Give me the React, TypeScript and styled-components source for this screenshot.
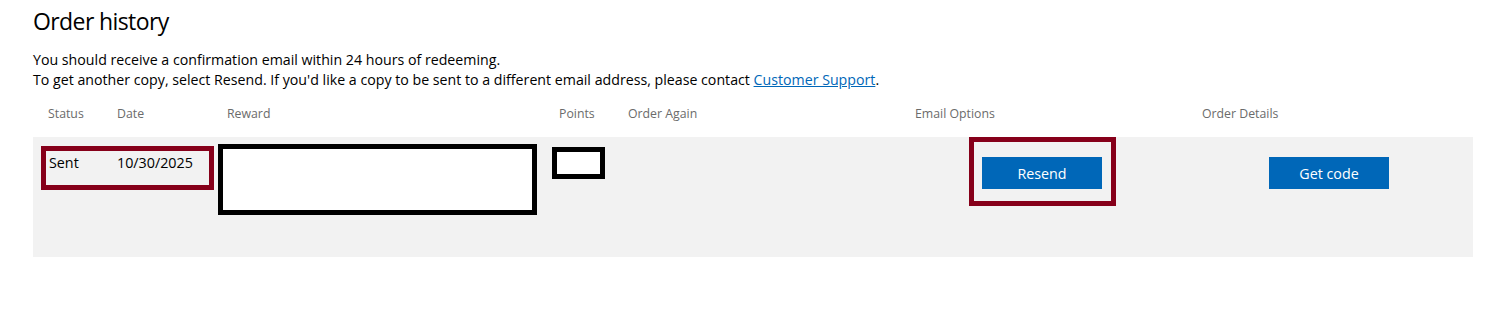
import React from "react";
import styled, { createGlobalStyle } from "styled-components";

const GlobalStyle = createGlobalStyle`
  html, body {
    margin: 0;
    padding: 0;
    background: #ffffff;
  }
  body {
    font-family: "Open Sans", "Noto Sans", "Liberation Sans", sans-serif;
    color: #000000;
  }
`;

const Page = styled.main`
  width: 1440px;
  padding: 0 33px;
`;

const Title = styled.h1`
  margin: 3px 0 0;
  font-size: 23px;
  letter-spacing: -0.6px;
  line-height: 36px;
  font-weight: 400;
  color: #000;
`;

const Intro = styled.p`
  margin: 11px 0 0;
  font-size: 14.2px;
  line-height: 20px;
`;

const Link = styled.a`
  color: #0067b8;
  text-decoration: underline;
`;

const Table = styled.div`
  margin-top: 13px;
  display: grid;
  grid-template-columns: 69px 110px 332px 69px 286px 286px 288px;
`;

const HeaderCell = styled.div<{ $pad: number }>`
  height: 33px;
  padding: 1px 0 0 ${(p) => p.$pad}px;
  font-size: 12.3px;
  line-height: 20px;
  color: #6b6b6b;
`;

const Row = styled.div`
  grid-column: 1 / -1;
  display: grid;
  grid-template-columns: subgrid;
  height: 120px;
  background: #f2f2f2;
  align-items: start;
`;

const Highlight = styled.div<{ $span?: number }>`
  grid-column: span ${(p) => p.$span ?? 1};
  box-sizing: border-box;
  border: 5px solid #86001a;
`;

const DateGroup = styled(Highlight)`
  margin: 9px 0 0 8px;
  width: 173px;
  height: 44px;
  display: flex;
  padding: 2px 0 0 3px;
  font-size: 14.3px;
  line-height: 20px;
`;

const StatusText = styled.span`
  width: 68px;
`;

const EmailGroup = styled(Highlight)`
  justify-self: center;
  width: 147px;
  height: 69px;
  display: flex;
  justify-content: center;
  padding-top: 15px;
`;

const Redaction = styled.div<{ $w: number; $h: number; $left: number; $top: number }>`
  box-sizing: border-box;
  width: ${(p) => p.$w}px;
  height: ${(p) => p.$h}px;
  margin: ${(p) => p.$top}px 0 0 ${(p) => p.$left}px;
  border: 5px solid #000;
  background: #fff;
`;

const Empty = styled.div``;

const ButtonCell = styled.div`
  display: flex;
  justify-content: center;
  padding-top: 20px;
`;

const Button = styled.button`
  width: 120px;
  height: 32px;
  border: none;
  padding: 1px 0 0;
  background: #0067b8;
  color: #fff;
  font-family: inherit;
  font-size: 14.3px;
  line-height: 20px;
  cursor: pointer;
`;

const headers: [string, number][] = [
  ["Status", 15],
  ["Date", 15],
  ["Reward", 15],
  ["Points", 15],
  ["Order Again", 15],
  ["Email Options", 16],
  ["Order Details", 17],
];

export default function App() {
  return (
    <>
      <GlobalStyle />
      <Page>
        <Title>Order history</Title>
        <Intro>
          You should receive a confirmation email within 24 hours of redeeming.
          <br />
          To get another copy, select Resend. If you'd like a copy to be sent to a different email address, please
          contact <Link href="#">Customer Support</Link>.
        </Intro>
        <Table>
          {headers.map(([h, pad]) => (
            <HeaderCell key={h} $pad={pad}>
              {h}
            </HeaderCell>
          ))}
          <Row>
            <DateGroup $span={2}>
              <StatusText>Sent</StatusText>
              <span>10/30/2025</span>
            </DateGroup>
            <Redaction $w={319} $h={71} $left={6} $top={7} />
            <Redaction $w={53} $h={32} $left={8} $top={10} />
            <Empty />
            <EmailGroup>
              <Button>Resend</Button>
            </EmailGroup>
            <ButtonCell>
              <Button>Get code</Button>
            </ButtonCell>
          </Row>
        </Table>
      </Page>
    </>
  );
}
